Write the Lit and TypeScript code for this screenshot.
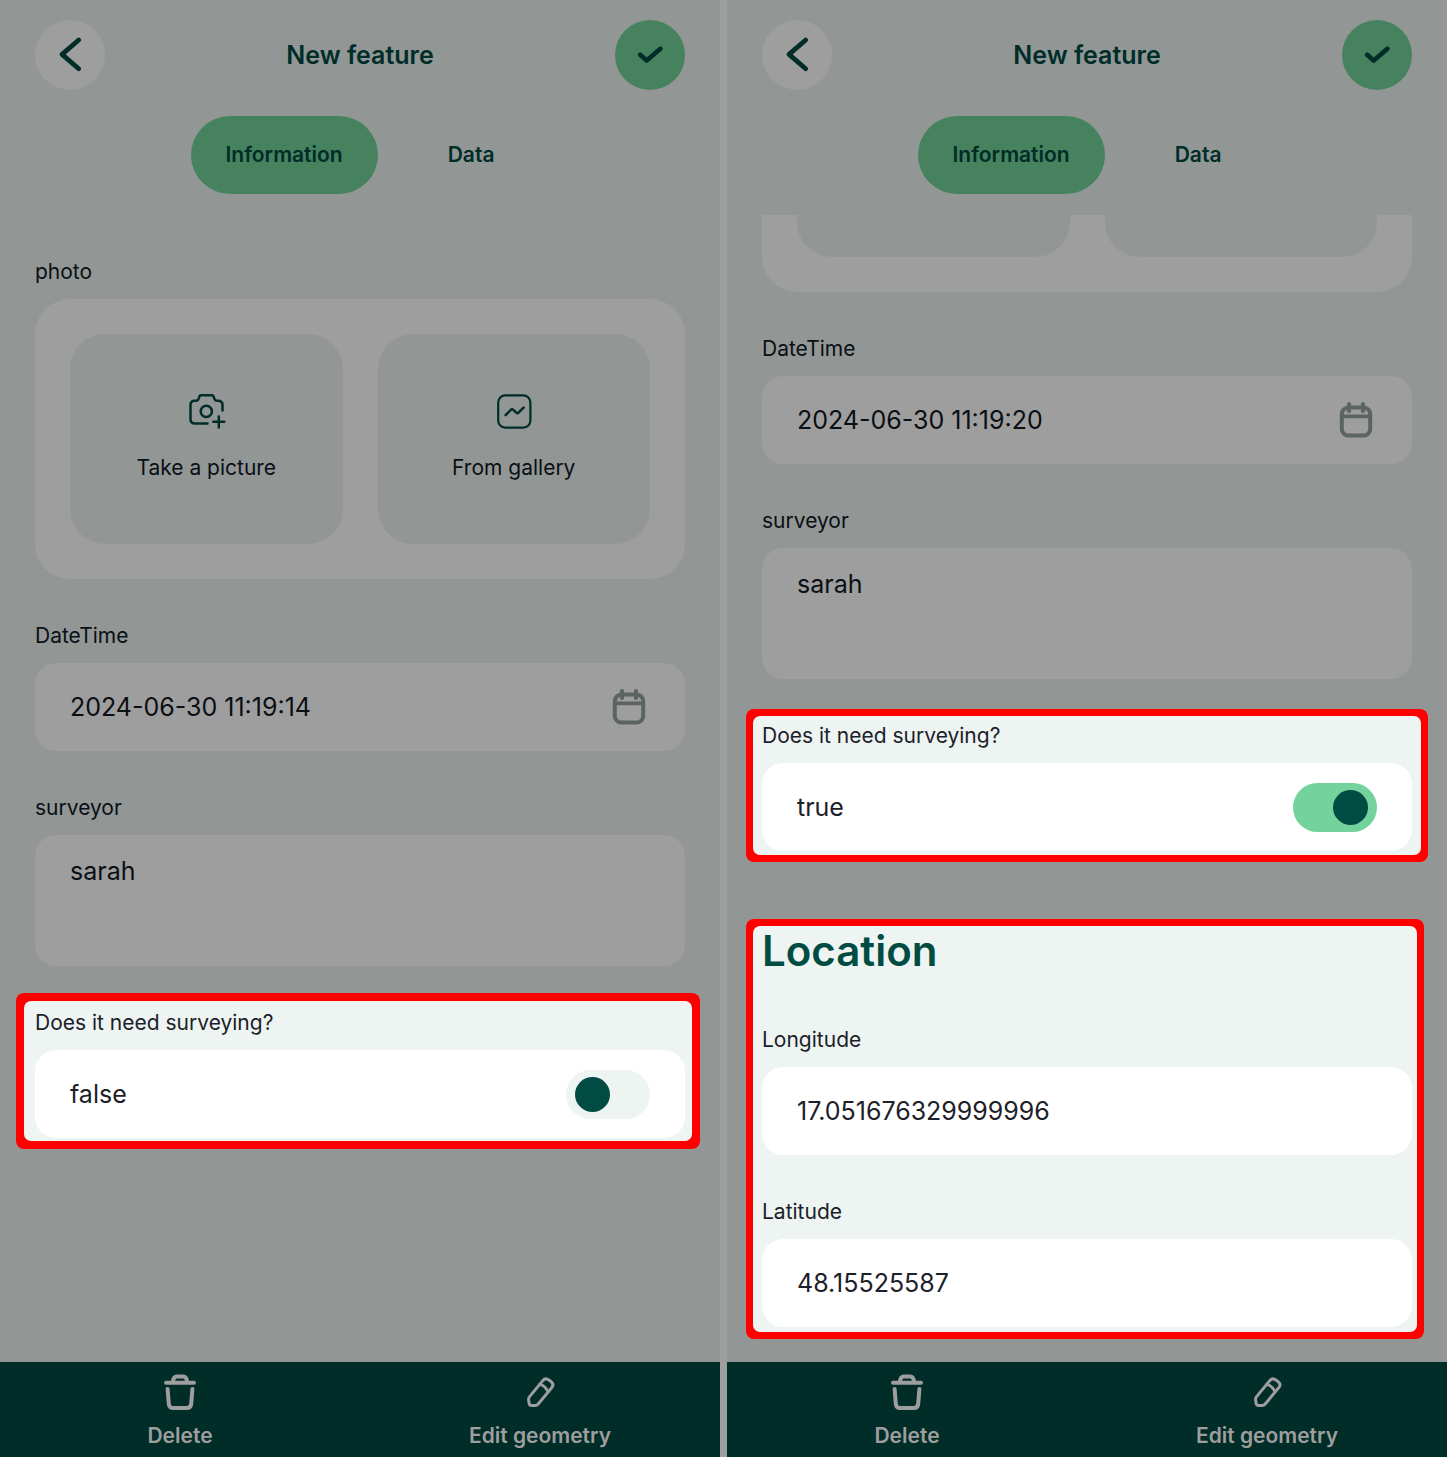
import { LitElement, html, css, svg, nothing } from "lit";
import { customElement, property, state } from "lit/decorators.js";

const backIcon = svg`<svg class="icon" width="70" height="70" viewBox="0 0 70 70" aria-hidden="true">
  <path d="M43.7 20 L27 34.4 L43.7 48.8" stroke-width="4.8" />
</svg>`;

const checkIcon = svg`<svg class="icon" width="70" height="70" viewBox="0 0 70 70" aria-hidden="true">
  <path d="M25.2 34.8 L31.7 40.5 L45.4 28.7" stroke-width="4.7" />
</svg>`;

const cameraIcon = svg`<svg class="icon" width="42" height="42" viewBox="0 0 42 42" aria-hidden="true">
  <g stroke-width="2.5">
    <path d="M22.5 33.5 H10 Q5.5 33.5 5.5 29 V15 Q5.5 10.7 9.8 10.7 H11 Q13.2 10.7 13.8 8.3 Q14.4 5.3 16.2 5.3 H26.8 Q28.6 5.3 29.2 8.3 Q29.8 10.7 32 10.7 H33.2 Q37.5 10.7 37.5 15 V20.5" />
    <circle cx="21.3" cy="21.4" r="5.6" />
    <path d="M33.8 26.4 V37.4 M28.3 31.8 H39.3" />
  </g>
</svg>`;

const galleryIcon = svg`<svg class="icon" width="42" height="42" viewBox="0 0 42 42" aria-hidden="true">
  <rect x="5.2" y="5.4" width="32.2" height="32.2" rx="7" stroke-width="2.2" />
  <path d="M12.6 25.2 L18.3 19.4 Q19 18.9 19.7 19.4 L23.8 23 Q24.6 23.6 25.3 22.9 L30.6 17.7" stroke-width="2.5" />
</svg>`;

const calendarIcon = svg`<svg class="icon" width="42" height="42" viewBox="0 0 42 42" aria-hidden="true">
  <rect x="6.8" y="8.6" width="28.4" height="28" rx="6.6" stroke-width="4" />
  <path d="M7 17.3 H35" stroke-width="3.8" />
  <path d="M14 5.2 V12 M28 5.2 V12" stroke-width="4.2" />
</svg>`;

const trashIcon = svg`<svg class="icon" width="36" height="36" viewBox="0 0 36 36" aria-hidden="true">
  <g stroke-width="4">
    <path d="M4 8.7 H32" />
    <path d="M11 8 Q11.2 2.4 14.8 2.4 H21.2 Q24.8 2.4 25 8" />
    <path d="M5.6 15 L6.8 29.8 Q7.2 34 11 34 H25 Q28.8 34 29.2 29.8 L30.4 15" />
  </g>
</svg>`;

const pencilIcon = svg`<svg class="icon" width="36" height="36" viewBox="0 0 36 36" aria-hidden="true">
  <g stroke-width="3">
    <path d="M20.8 6.6 Q23.6 3.4 27.2 6.2 L29.6 8.2 Q32.2 10.6 29.8 13.6 L16.2 30 Q14.9 31.5 13 31.5 H9 Q7.6 31.5 7.3 30.2 L6.6 26 Q6.3 24.2 7.4 22.9 Z" />
    <path d="M17.9 10.4 Q23 11.6 25.9 17.6" />
  </g>
</svg>`;

@customElement("feature-panel")
class FeaturePanel extends LitElement {
  @property() date = "";
  @property() surveyor = "";
  @property({ type: Boolean }) needed = false;
  @property({ type: Boolean }) scrolled = false;
  @state() private tab = "Information";

  static styles = css`
    :host {
      --page: #929796;
      --card: #9e9e9e;
      --ink: #0a0f14;
      --forest: #002d28;
      --leaf: #47825f;
      display: flex;
      flex-direction: column;
      min-width: 0;
      min-height: 100vh;
      background: var(--page);
      color: var(--ink);
      font: 400 21px/30px Inter, "Liberation Sans", sans-serif;
    }
    * {
      box-sizing: border-box;
    }
    button,
    input,
    textarea {
      margin: 0;
      padding: 0;
      border: 0;
      background: none;
      color: inherit;
      font: inherit;
    }
    button {
      cursor: pointer;
    }
    .icon {
      display: block;
      flex: none;
      fill: none;
      stroke: currentColor;
      stroke-linecap: round;
      stroke-linejoin: round;
    }
    .header {
      display: flex;
      align-items: center;
      justify-content: space-between;
      padding: 20px 35px 0;
      color: var(--forest);
    }
    .title {
      margin: 0;
      font-size: 25px;
      line-height: 32px;
      font-weight: 600;
    }
    .round {
      width: 70px;
      height: 70px;
      border-radius: 50%;
      background: var(--card);
    }
    .round.save {
      background: var(--leaf);
    }
    .tabs {
      display: flex;
      justify-content: center;
      gap: 35px;
      padding: 26px 35px 21px;
    }
    .tab {
      height: 78px;
      padding: 0 35px;
      border-radius: 39px;
      color: var(--forest);
      font-weight: 600;
    }
    .tab.active {
      background: var(--leaf);
    }
    .form {
      flex: 1;
      display: flex;
      flex-direction: column;
      gap: 42px;
      padding: 42px 35px 23px;
    }
    .form.scrolled {
      padding-top: 0;
    }
    .field {
      display: flex;
      flex-direction: column;
      gap: 12px;
      min-width: 0;
    }
    .label {
      display: block;
      margin: 0;
    }
    .box {
      display: flex;
      align-items: center;
      justify-content: space-between;
      height: 88px;
      padding: 0 35px;
      border-radius: 21px;
      background: var(--card);
      font-size: 25px;
      line-height: 32px;
    }
    .text {
      flex: 1;
      min-width: 0;
      width: 100%;
    }
    .area {
      display: block;
      width: 100%;
      height: 131px;
      padding: 20px 35px;
      border-radius: 21px;
      background: var(--card);
      font-size: 25px;
      line-height: 32px;
      resize: none;
    }
    .calendar {
      color: #5b6463;
    }
    .photos {
      display: grid;
      grid-template-columns: 1fr 1fr;
      gap: 35px;
      padding: 35px;
      border-radius: 35px;
      background: var(--card);
    }
    .tile {
      display: flex;
      flex-direction: column;
      align-items: center;
      justify-content: center;
      gap: 21px;
      height: 210px;
      padding-bottom: 6px;
      border-radius: 35px;
      background: var(--page);
    }
    .tile .icon {
      color: var(--forest);
    }
    .scrolled .photos {
      padding-top: 0;
      border-radius: 0 0 35px 35px;
    }
    .scrolled .tile {
      height: 42px;
      border-radius: 0 0 35px 35px;
    }
    .spot {
      margin: -15px -15px -11px -19px;
      padding: 8px;
      border-radius: 8px;
      background: #ff0000;
    }
    .inner {
      --page: #edf4f2;
      --card: #ffffff;
      --ink: #1c2129;
      --forest: #004c43;
      --leaf: #74d39c;
      padding: 7px 7px 3px 11px;
      border-radius: 7px;
      background: var(--page);
      color: var(--ink);
    }
    .scrolled .spot {
      margin: -12px -16px -11px;
      padding: 7px;
    }
    .scrolled .inner {
      padding: 5px 9px 4px;
    }
    .scrolled .spot.place {
      margin: 26px -12px 0 -16px;
    }
    .scrolled .spot.place .inner {
      padding: 0 5px 5px 9px;
    }
    .heading {
      margin: 0;
      color: var(--forest);
      font-size: 42px;
      line-height: 50px;
      font-weight: 600;
    }
    .stack {
      display: flex;
      flex-direction: column;
      gap: 42px;
      padding-top: 49px;
    }
    .switch {
      appearance: none;
      display: flex;
      align-items: center;
      width: 84px;
      height: 49px;
      padding: 0 9px;
      border-radius: 25px;
      background: var(--page);
      cursor: pointer;
    }
    .switch::before {
      content: "";
      width: 35px;
      height: 35px;
      border-radius: 50%;
      background: var(--forest);
    }
    .switch:checked {
      justify-content: flex-end;
      background: var(--leaf);
    }
    .toolbar {
      display: grid;
      grid-template-columns: 1fr 1fr;
      background: var(--forest);
      color: #9e9e9e;
    }
    .action {
      display: flex;
      flex-direction: column;
      align-items: center;
      gap: 11px;
      padding: 12px 0 6px;
      font-weight: 600;
    }
  `;

  private textField(id: string, label: string, value: string, calendar = false) {
    return html`<div class="field">
      <label class="label" for=${id}>${label}</label>
      <div class="box">
        <input class="text" id=${id} type="text" .value=${value} />
        ${calendar
          ? html`<button class="calendar" type="button" aria-label="Pick a date">${calendarIcon}</button>`
          : nothing}
      </div>
    </div>`;
  }

  private photoField() {
    if (this.scrolled) {
      return html`<div class="photos"><div class="tile"></div><div class="tile"></div></div>`;
    }
    return html`<div class="field" role="group" aria-labelledby="photo">
      <p class="label" id="photo">photo</p>
      <div class="photos">
        <button class="tile" type="button">${cameraIcon}<span>Take a picture</span></button>
        <button class="tile" type="button">${galleryIcon}<span>From gallery</span></button>
      </div>
    </div>`;
  }

  render() {
    return html`
      <header class="header">
        <button class="round" type="button" aria-label="Back">${backIcon}</button>
        <h1 class="title">New feature</h1>
        <button class="round save" type="button" aria-label="Save">${checkIcon}</button>
      </header>
      <nav class="tabs">
        ${["Information", "Data"].map(
          (name) => html`<button
            class="tab ${this.tab === name ? "active" : ""}"
            type="button"
            @click=${() => (this.tab = name)}
          >${name}</button>`
        )}
      </nav>
      <form class="form ${this.scrolled ? "scrolled" : ""}">
        ${this.photoField()}
        ${this.textField("date", "DateTime", this.date, true)}
        <div class="field">
          <label class="label" for="surveyor">surveyor</label>
          <textarea class="area" id="surveyor" .value=${this.surveyor}></textarea>
        </div>
        <div class="spot">
          <div class="inner">
            <div class="field">
              <label class="label" for="needed">Does it need surveying?</label>
              <div class="box">
                <span>${this.needed ? "true" : "false"}</span>
                <input
                  class="switch"
                  id="needed"
                  type="checkbox"
                  .checked=${this.needed}
                  @change=${(e: Event) => (this.needed = (e.target as HTMLInputElement).checked)}
                />
              </div>
            </div>
          </div>
        </div>
        ${this.scrolled
          ? html`<section class="spot place">
              <div class="inner">
                <h2 class="heading">Location</h2>
                <div class="stack">
                  ${this.textField("longitude", "Longitude", "17.051676329999996")}
                  ${this.textField("latitude", "Latitude", "48.15525587")}
                </div>
              </div>
            </section>`
          : nothing}
      </form>
      <footer class="toolbar">
        <button class="action" type="button">${trashIcon}<span>Delete</span></button>
        <button class="action" type="button">${pencilIcon}<span>Edit geometry</span></button>
      </footer>
    `;
  }
}

@customElement("app-root")
class AppRoot extends LitElement {
  static styles = css`
    :host {
      display: grid;
      grid-template-columns: 1fr 1fr;
      gap: 7px;
      background: #9e9e9e;
    }
  `;

  render() {
    return html`
      <feature-panel date="2024-06-30 11:19:14" surveyor="sarah"></feature-panel>
      <feature-panel date="2024-06-30 11:19:20" surveyor="sarah" needed scrolled></feature-panel>
    `;
  }
}
